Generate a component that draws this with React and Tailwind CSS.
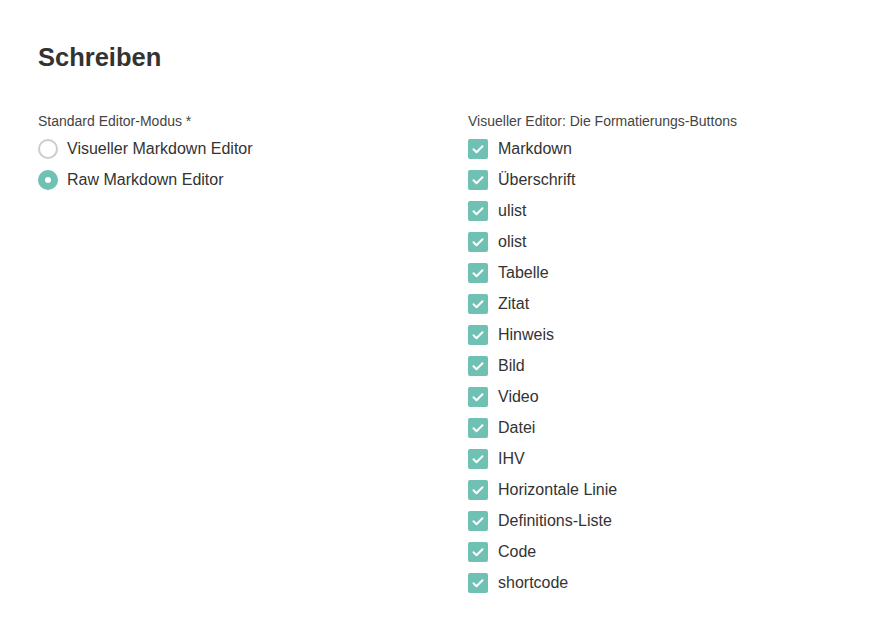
import React from "react";

const buttons = [
    "Markdown",
    "Überschrift",
    "ulist",
    "olist",
    "Tabelle",
    "Zitat",
    "Hinweis",
    "Bild",
    "Video",
    "Datei",
    "IHV",
    "Horizontale Linie",
    "Definitions-Liste",
    "Code",
    "shortcode",
];

const Radio = ({ checked, label }) => (
    <label className="flex items-center h-[31px] gap-[9px] cursor-pointer">
        {checked ? (
            <span className="w-5 h-5 rounded-full bg-[#6fc1b3] flex items-center justify-center">
                <span className="w-[6px] h-[6px] rounded-full bg-white" />
            </span>
        ) : (
            <span className="w-5 h-5 rounded-full border-2 border-[#cccccc] bg-white" />
        )}
        <span className="text-[16px] text-[#333333]">{label}</span>
    </label>
);

const Checkbox = ({ label }) => (
    <label className="flex items-center h-[31px] gap-[10px] cursor-pointer">
        <span className="w-5 h-5 rounded-[2px] bg-[#6fc1b3] flex items-center justify-center">
            <svg width="16" height="16" viewBox="0 0 16 16" fill="none">
                <path d="M3.5 8.3l3 3L12.5 5.2" stroke="white" strokeWidth="2" strokeLinecap="round" strokeLinejoin="round" />
            </svg>
        </span>
        <span className="text-[16px] text-[#333333]">{label}</span>
    </label>
);

const App = () => {
    return (
        <div className="min-h-[636px] bg-white px-[38px] pt-[40px]" style={{ fontFamily: '"Liberation Sans", Arial, sans-serif' }}>
            {/* Header */}
            <h1 className="text-[25.5px] font-bold text-[#333333] leading-[34px]">Schreiben</h1>

            <div className="flex mt-[37px]">
                {/* Editor mode */}
                <div className="w-[430px]">
                    <p className="text-[14px] text-[#444444] leading-[20px] mb-[2px]">Standard Editor-Modus *</p>
                    <Radio label="Visueller Markdown Editor" />
                    <Radio checked label="Raw Markdown Editor" />
                </div>

                {/* Formatting buttons */}
                <div>
                    <p className="text-[14px] text-[#444444] leading-[20px] mb-[2px]">Visueller Editor: Die Formatierungs-Buttons</p>
                    {buttons.map((b) => (
                        <Checkbox key={b} label={b} />
                    ))}
                </div>
            </div>
        </div>
    );
};

export default App;
